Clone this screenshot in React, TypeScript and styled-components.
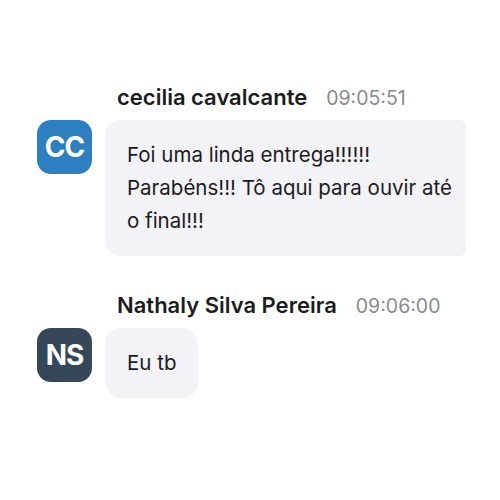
import React from "react";
import styled, { createGlobalStyle } from "styled-components";

const GlobalStyle = createGlobalStyle`
  html, body {
    margin: 0;
    padding: 0;
    background: #ffffff;
    font-family: Inter, "Noto Sans", sans-serif;
  }
`;

const Feed = styled.div`
  display: flex;
  flex-direction: column;
  gap: 37px;
  padding: 85px 0 0 37px;
  width: 466px;
  box-sizing: border-box;
  overflow: hidden;
`;

const Message = styled.div`
  display: flex;
  flex-direction: column;
  gap: 10px;
`;

const Header = styled.div`
  display: flex;
  align-items: baseline;
  gap: 19px;
  padding-left: 80px;
  line-height: 24px;
`;

const Name = styled.span`
  font-size: 22px;
  font-weight: 600;
  color: #1c1c1e;
`;

const Time = styled.span`
  font-size: 19.5px;
  font-weight: 400;
  color: #8a8a8e;
`;

const Row = styled.div`
  display: flex;
  align-items: flex-start;
  gap: 13px;
`;

const Avatar = styled.div<{ $bg: string }>`
  flex: 0 0 auto;
  width: 55px;
  height: 54px;
  border-radius: 14px;
  background: ${(p) => p.$bg};
  color: #ffffff;
  display: flex;
  align-items: center;
  justify-content: center;
  font-size: 28px;
  font-weight: 700;
  letter-spacing: -1px;
`;

const Bubble = styled.div<{ $wide?: boolean }>`
  background: #f2f2f7;
  border-radius: ${(p) => (p.$wide ? "16px 6px 6px 16px" : "16px")};
  padding: 18px 22px 19px;
  font-size: 20.5px;
  line-height: 33px;
  color: #1c1c1e;
  ${(p) => (p.$wide ? "flex: 1 1 auto; padding-right: 12px;" : "")}
`;

const Line = styled.div`
  white-space: nowrap;
`;

const messages = [
  {
    initials: "CC",
    color: "#2e7fc0",
    name: "cecilia cavalcante",
    time: "09:05:51",
    lines: ["Foi uma linda entrega!!!!!!", "Parabéns!!! Tô aqui para ouvir até", "o final!!!"],
    wide: true,
  },
  {
    initials: "NS",
    color: "#36475a",
    name: "Nathaly Silva Pereira",
    time: "09:06:00",
    lines: ["Eu tb"],
    wide: false,
  },
];

export default function App() {
  return (
    <>
      <GlobalStyle />
      <Feed>
        {messages.map((m) => (
          <Message key={m.time}>
            <Header>
              <Name>{m.name}</Name>
              <Time>{m.time}</Time>
            </Header>
            <Row>
              <Avatar $bg={m.color}>{m.initials}</Avatar>
              <Bubble $wide={m.wide}>
                {m.lines.map((l, i) => (
                  <Line key={i}>{l}</Line>
                ))}
              </Bubble>
            </Row>
          </Message>
        ))}
      </Feed>
    </>
  );
}
